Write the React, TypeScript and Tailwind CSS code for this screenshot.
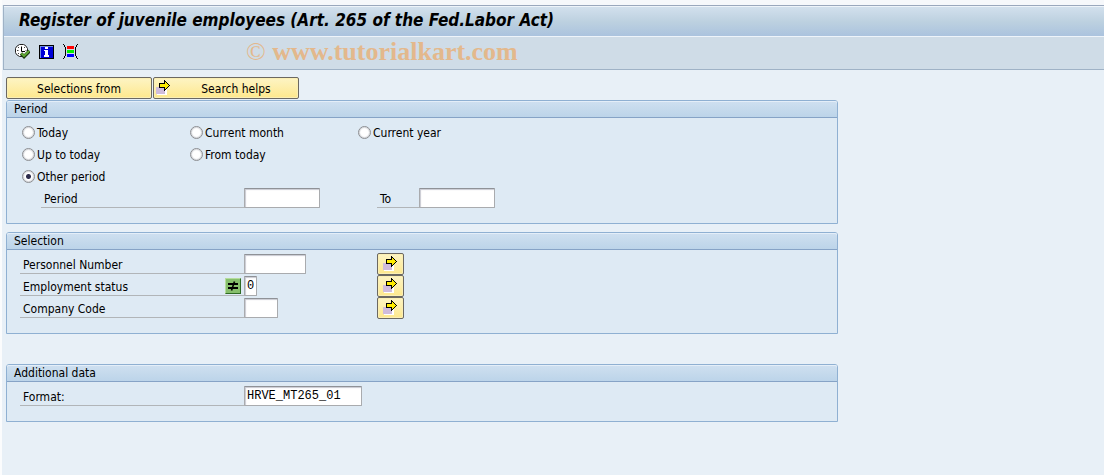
import type { ComponentProps, ReactNode } from "react";
import { useState } from "react";

const ExecuteIcon = () => (
  <svg width="15" height="15" viewBox="0 0 15 15" aria-hidden="true">
    <path
      d="M4.5 0.5h4l2 1l2 3v4l-2 3l-2 1h-4l-3-2l-1-2v-4l1-2z"
      fill="#fff"
      stroke="#222"
      strokeWidth="1"
    />
    <path d="M6.5 2.5V7.5H10" fill="none" stroke="#000" strokeWidth="1" />
    <path d="M2 6.5h1.5M10.5 6.5h1M3 3l1 1M10 3l-1 1M3 10l1-1" stroke="#444" strokeWidth="1" />
    <path d="M6 9.5L9 12.5L14.5 7" fill="none" stroke="#1d3a10" strokeWidth="3.4" />
    <path d="M6.3 9.3L9 12L14.2 6.8" fill="none" stroke="#63ad35" strokeWidth="1.9" />
  </svg>
);

const InfoIcon = () => (
  <svg width="15" height="14" viewBox="0 0 15 14" shapeRendering="crispEdges" aria-hidden="true">
    <path fill="#000" d="M0 0h15v14H0z" />
    <path fill="#6f8be6" d="M1 1h13v1H2v11H1z" />
    <path fill="#0000d8" d="M2 2h12v11H2z" />
    <path fill="#fff" d="M6 2h3v2H6zM5 5h4v5h1v2H5v-2h1V6H5z" />
  </svg>
);

const VariantIcon = () => (
  <svg width="15" height="15" viewBox="0 0 15 15" shapeRendering="crispEdges" aria-hidden="true">
    <path
      fill="#000"
      d="M0 0h1v1H0zM1 1h1v2H1zM2 3h1v9H2zM1 12h1v2H1zM0 14h1v1H0zM14 0h1v1h-1zM13 1h1v2h-1zM12 3h1v9h-1zM13 12h1v2h-1zM14 14h1v1h-1z"
    />
    <path fill="#f00" d="M4 2h7v3H4z" />
    <path fill="#0e0" d="M4 6h7v3H4z" />
    <path fill="#00f" d="M4 10h7v3H4z" />
  </svg>
);

const ArrowIcon = () => (
  <svg width="15" height="15" viewBox="0 0 15 15" shapeRendering="crispEdges" aria-hidden="true">
    <path fill="#fff" d="M1 8h10v7H1z" />
    <path fill="#d0bcdc" d="M0 7h9v7H0z" />
    <path
      fill="#000"
      d="M8 0h1v1h1v1h1v1h1v1h1v1h1v1h-1v1h-1v1h-1v1h-1v1H9v1H8V8H3V3h5z"
    />
    <path fill="#ffec00" d="M4 4h5V2h1v1h1v1h1v1h1v1h-1v1h-1v1h-1v1H9V7H4z" />
  </svg>
);

const NotEqualIcon = () => (
  <svg width="10" height="10" viewBox="0 0 10 10" aria-hidden="true">
    <path d="M0 3h10M0 7h10" stroke="#000" strokeWidth="2" />
    <path d="M6.5 0.5L3.5 9.5" stroke="#000" strokeWidth="1.6" />
  </svg>
);

const yellow =
  "border border-[#6b6862] rounded-[2px] bg-linear-to-b from-[#fdf4c4] to-[#fee88c] shadow-[inset_0_0_0_1px_#fbefb4]";

const ArrowButton = ({ label }: { label: string }) => (
  <button aria-label={label} className={`${yellow} flex h-[22px] w-[27px] justify-center pt-[2px]`}>
    <ArrowIcon />
  </button>
);

const TextField = ({ className = "", ...props }: ComponentProps<"input">) => (
  <input
    type="text"
    className={`h-5 shrink-0 rounded-[1px] border border-[#a9abae] border-t-[#8f9297] bg-white px-[2px] font-['Liberation_Mono',monospace] text-[12px] leading-4 shadow-[inset_1px_1px_1px_#c9cad2] outline-none ${className}`}
    {...props}
  />
);

const FieldLabel = ({ htmlFor, className = "", children }: { htmlFor: string; className?: string; children: ReactNode }) => (
  <label htmlFor={htmlFor} className={`h-5 shrink-0 border-b border-[#b1b5b8] pl-[3px] leading-[22px] ${className}`}>
    {children}
  </label>
);

const Panel = ({ title, children }: { title: string; children: ReactNode }) => (
  <section className="w-full max-w-[832px] rounded-t-[3px] border border-[#8fb0d2] bg-[#deeaf4]">
    <h2 className="h-[17px] rounded-t-[2px] border-b border-[#86a3c6] bg-linear-to-b from-[#cfe0f0] to-[#bcd4e9] pl-[7px] leading-4 shadow-[inset_0_1px_0_#e4eef8]">
      {title}
    </h2>
    <div className="pt-[3px] pb-[14px] pl-[13px]">{children}</div>
  </section>
);

const periods = ["Today", "Current month", "Current year", "Up to today", "From today", "", "Other period"];

const PeriodRadio = ({ name, checked, onSelect }: { name: string; checked: boolean; onSelect: () => void }) => (
  <label className="flex h-[22px] items-center gap-[2px]">
    <input
      type="radio"
      name="period"
      checked={checked}
      onChange={onSelect}
      className="size-[13px] appearance-none rounded-full border border-[#8b8d91] bg-white shadow-[inset_0_0_1px_1px_#d4d6da] checked:bg-[radial-gradient(circle,#2c2c4c_2px,white_3px)]"
    />
    <span className="pt-[2px]">{name}</span>
  </label>
);

const Row = ({ children }: { children: ReactNode }) => <div className="flex h-[22px] items-center">{children}</div>;

export default function App() {
  const [period, setPeriod] = useState("Other period");

  return (
    <div className="min-h-screen border-l-2 border-[#fbfcfd] bg-[#e8f0f7] font-['DejaVu_Sans_Condensed','DejaVu_Sans',sans-serif] text-[12px] text-black [font-stretch:condensed]">
      <div className="h-[5px] bg-[#f6f8fb]" />
      <header className="ml-px border-y border-l border-[#9fb2c6] border-t-[#9aa8bd]">
        <h1 className="h-[31px] border-t border-b border-[#eef4fa] bg-linear-to-b from-[#d2e0ed] via-[#bdd1e0] to-[#abc3de] pl-[15px] text-[17px] leading-[26px] font-bold italic">
          Register of juvenile employees (Art. 265 of the Fed.Labor Act)
        </h1>
        <div className="flex h-8 items-center bg-[#cfdce7] pb-[3px] pl-[11px]">
          <div className="flex items-center gap-[9px]">
            <button aria-label="Execute">
              <ExecuteIcon />
            </button>
            <button aria-label="Information">
              <InfoIcon />
            </button>
            <button aria-label="Get variant">
              <VariantIcon />
            </button>
          </div>
          <p className="ml-[168px] font-['Liberation_Serif',serif] text-[26px] leading-8 font-bold text-[#e3b88c]">
            <span className="font-normal">©</span> www.tutorialkart.com
          </p>
        </div>
      </header>

      <main className="pt-[7px] pl-1">
        <div className="flex gap-px pb-px">
          <button className={`${yellow} h-[22px] w-[146px] pt-[2px]`}>Selections from</button>
          <button className={`${yellow} flex h-[22px] w-[146px] pt-[2px] pl-[2px]`}>
            <ArrowIcon />
            <span className="grow pl-[3px]">Search helps</span>
          </button>
        </div>

        <div className="flex flex-col">
          <Panel title="Period">
            <div className="grid grid-cols-[168px_168px_168px] pl-[2px]">
              {periods.map((name) =>
                name ? (
                  <PeriodRadio key={name} name={name} checked={period === name} onSelect={() => setPeriod(name)} />
                ) : (
                  <span key="blank" />
                ),
              )}
            </div>
            <Row>
              <FieldLabel htmlFor="from" className="ml-[21px] w-[203px]">
                Period
              </FieldLabel>
              <TextField id="from" className="w-[76px]" />
              <FieldLabel htmlFor="to" className="ml-[57px] w-[42px]">
                To
              </FieldLabel>
              <TextField id="to" className="w-[76px]" />
            </Row>
          </Panel>

          <div className="pt-2 pb-[30px]">
            <Panel title="Selection">
              <Row>
                <FieldLabel htmlFor="pernr" className="w-[224px]">
                  Personnel Number
                </FieldLabel>
                <div className="flex w-[133px]">
                  <TextField id="pernr" className="w-[62px]" />
                </div>
                <ArrowButton label="Multiple selection for personnel number" />
              </Row>
              <Row>
                <FieldLabel htmlFor="status" className="w-[205px]">
                  Employment status
                </FieldLabel>
                <div className="h-5 w-[19px] border-b border-[#b1b5b8] pt-[2px]">
                  <button
                    aria-label="Not equal to"
                    className="flex size-4 items-center justify-center border border-[#b5dc9c] border-r-[#2f6b25] border-b-[#2f6b25] bg-[#86bf6c]"
                  >
                    <NotEqualIcon />
                  </button>
                </div>
                <div className="flex w-[133px]">
                  <TextField id="status" defaultValue="0" className="w-[13px]" />
                </div>
                <ArrowButton label="Multiple selection for employment status" />
              </Row>
              <Row>
                <FieldLabel htmlFor="bukrs" className="w-[224px]">
                  Company Code
                </FieldLabel>
                <div className="flex w-[133px]">
                  <TextField id="bukrs" className="w-[34px]" />
                </div>
                <ArrowButton label="Multiple selection for company code" />
              </Row>
            </Panel>
          </div>

          <Panel title="Additional data">
            <Row>
              <FieldLabel htmlFor="format" className="w-[224px]">
                Format:
              </FieldLabel>
              <TextField id="format" defaultValue="HRVE_MT265_01" className="w-[118px]" />
            </Row>
          </Panel>
        </div>
      </main>
    </div>
  );
}
